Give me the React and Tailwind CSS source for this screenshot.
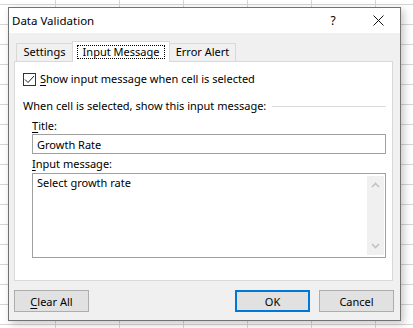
import { useState } from 'react';

const TABS = ['Settings', 'Input Message', 'Error Alert'];

function Chevron({ up }) {
    return (
        <svg width="9" height="6" viewBox="0 0 9 6" className="block">
            <path
                d={up ? 'M1 5L4.5 1.5L8 5' : 'M1 1L4.5 4.5L8 1'}
                fill="none"
                stroke="#c2c2c2"
                strokeWidth="1.6"
            />
        </svg>
    );
}

function Button({ children, primary }) {
    return (
        <button
            className={
                primary
                    ? 'w-[75px] h-[22px] bg-[#e1e1e1] border-2 border-[#0078d7] text-[11px] text-black leading-none'
                    : 'w-[75px] h-[22px] bg-[#e1e1e1] border border-[#adadad] text-[11px] text-black leading-none'
            }>
            {children}
        </button>
    );
}

export default function App() {
    const [showMsg, setShowMsg] = useState(true);
    const [title, setTitle] = useState('Growth Rate');

    return (
        <div className="w-[413px] h-[328px] overflow-hidden bg-white bg-[linear-gradient(to_right,#d6d6d6_1px,transparent_1px),linear-gradient(to_bottom,#d6d6d6_1px,transparent_1px)] bg-size-[64px_20px] bg-position-[55px_4px] pt-[7px] pl-[8px] font-['Noto_Sans',sans-serif] text-[11px] text-black">
            <div className="w-[393px] h-[314px] border border-[#727272] bg-[#f0f0f0] flex flex-col shadow-[3px_3px_8px_rgba(0,0,0,0.22)]">
                {/* title bar */}
                <div className="h-[25px] bg-white flex items-center">
                    <span className="pl-[3px] text-[11.5px]">Data Validation</span>
                    <span className="ml-auto w-[46px] text-center text-[12px]">?</span>
                    <span className="w-[44px] flex justify-center">
                        <svg width="11" height="11" viewBox="0 0 11 11">
                            <path d="M0.5 0.5L10.5 10.5M10.5 0.5L0.5 10.5" stroke="#111" strokeWidth="1" />
                        </svg>
                    </span>
                </div>

                <div className="flex-1 flex flex-col pl-[5px] pr-[7px] pt-[8px]">
                    {/* tabs */}
                    <div className="h-[20px] flex items-end">
                        <div className="ml-[2px] w-[56px] h-[18px] border-l border-t border-[#d9d9d9] flex items-center justify-center">
                            {TABS[0]}
                        </div>
                        <div className="relative z-10 -mb-px w-[98px] h-[21px] bg-white border-l border-t border-r border-[#d9d9d9] px-[4px] pt-[3px]">
                            <div className="h-[14px] border border-dotted border-black flex items-center justify-center">
                                {TABS[1]}
                            </div>
                        </div>
                        <div className="w-[66px] h-[18px] border-t border-r border-[#d9d9d9] flex items-center justify-center">
                            {TABS[2]}
                        </div>
                    </div>

                    {/* panel */}
                    <div className="h-[220px] bg-white border border-[#d9d9d9] pl-[8px] pr-[6px]">
                        <label className="mt-[9px] h-[16px] flex items-center">
                            <span
                                onClick={() => setShowMsg(!showMsg)}
                                className="w-[13px] h-[13px] border border-[#333] bg-white flex items-center justify-center">
                                {showMsg && (
                                    <svg width="11" height="11" viewBox="0 0 11 11">
                                        <path d="M1 5.5L4 8.5L10 2" fill="none" stroke="#222" strokeWidth="1" />
                                    </svg>
                                )}
                            </span>
                            <span className="ml-[4px]">
                                <span className="underline underline-offset-2">S</span>how input message when cell is selected
                            </span>
                        </label>

                        <div className="mt-[11px] h-[16px] flex items-center">
                            <span>When cell is selected, show this input message:</span>
                            <span className="flex-1 h-px bg-[#dcdcdc] ml-[6px]" />
                        </div>

                        <div className="ml-[9px]">
                            <div className="mt-[4px] h-[16px] flex items-center">
                                <span>
                                    <span className="underline underline-offset-2">T</span>itle:
                                </span>
                            </div>
                            <input
                                value={title}
                                onChange={(e) => setTitle(e.target.value)}
                                className="block w-full h-[20px] border border-[#a0a0a0] px-[4px] text-[11px] outline-none"
                            />
                            <div className="mt-[2px] h-[16px] flex items-center">
                                <span>
                                    <span className="underline underline-offset-2">I</span>nput message:
                                </span>
                            </div>
                            <div className="mt-[1px] h-[85px] border border-[#a0a0a0] flex">
                                <div className="flex-1 pl-[4px] pt-[1px] leading-[16px]">Select growth rate</div>
                                <div className="w-[17px] mt-[2px] mb-[2px] mr-px bg-[#f0f0f0] flex flex-col items-center justify-between py-[6px]">
                                    <Chevron up />
                                    <Chevron />
                                </div>
                            </div>
                        </div>
                    </div>

                    {/* buttons */}
                    <div className="mt-[9px] flex">
                        <Button>
                            <span className="underline underline-offset-2">C</span>lear All
                        </Button>
                        <div className="ml-auto flex gap-[9px] -mr-px">
                            <Button primary>OK</Button>
                            <Button>Cancel</Button>
                        </div>
                    </div>
                </div>
            </div>
        </div>
    );
}
